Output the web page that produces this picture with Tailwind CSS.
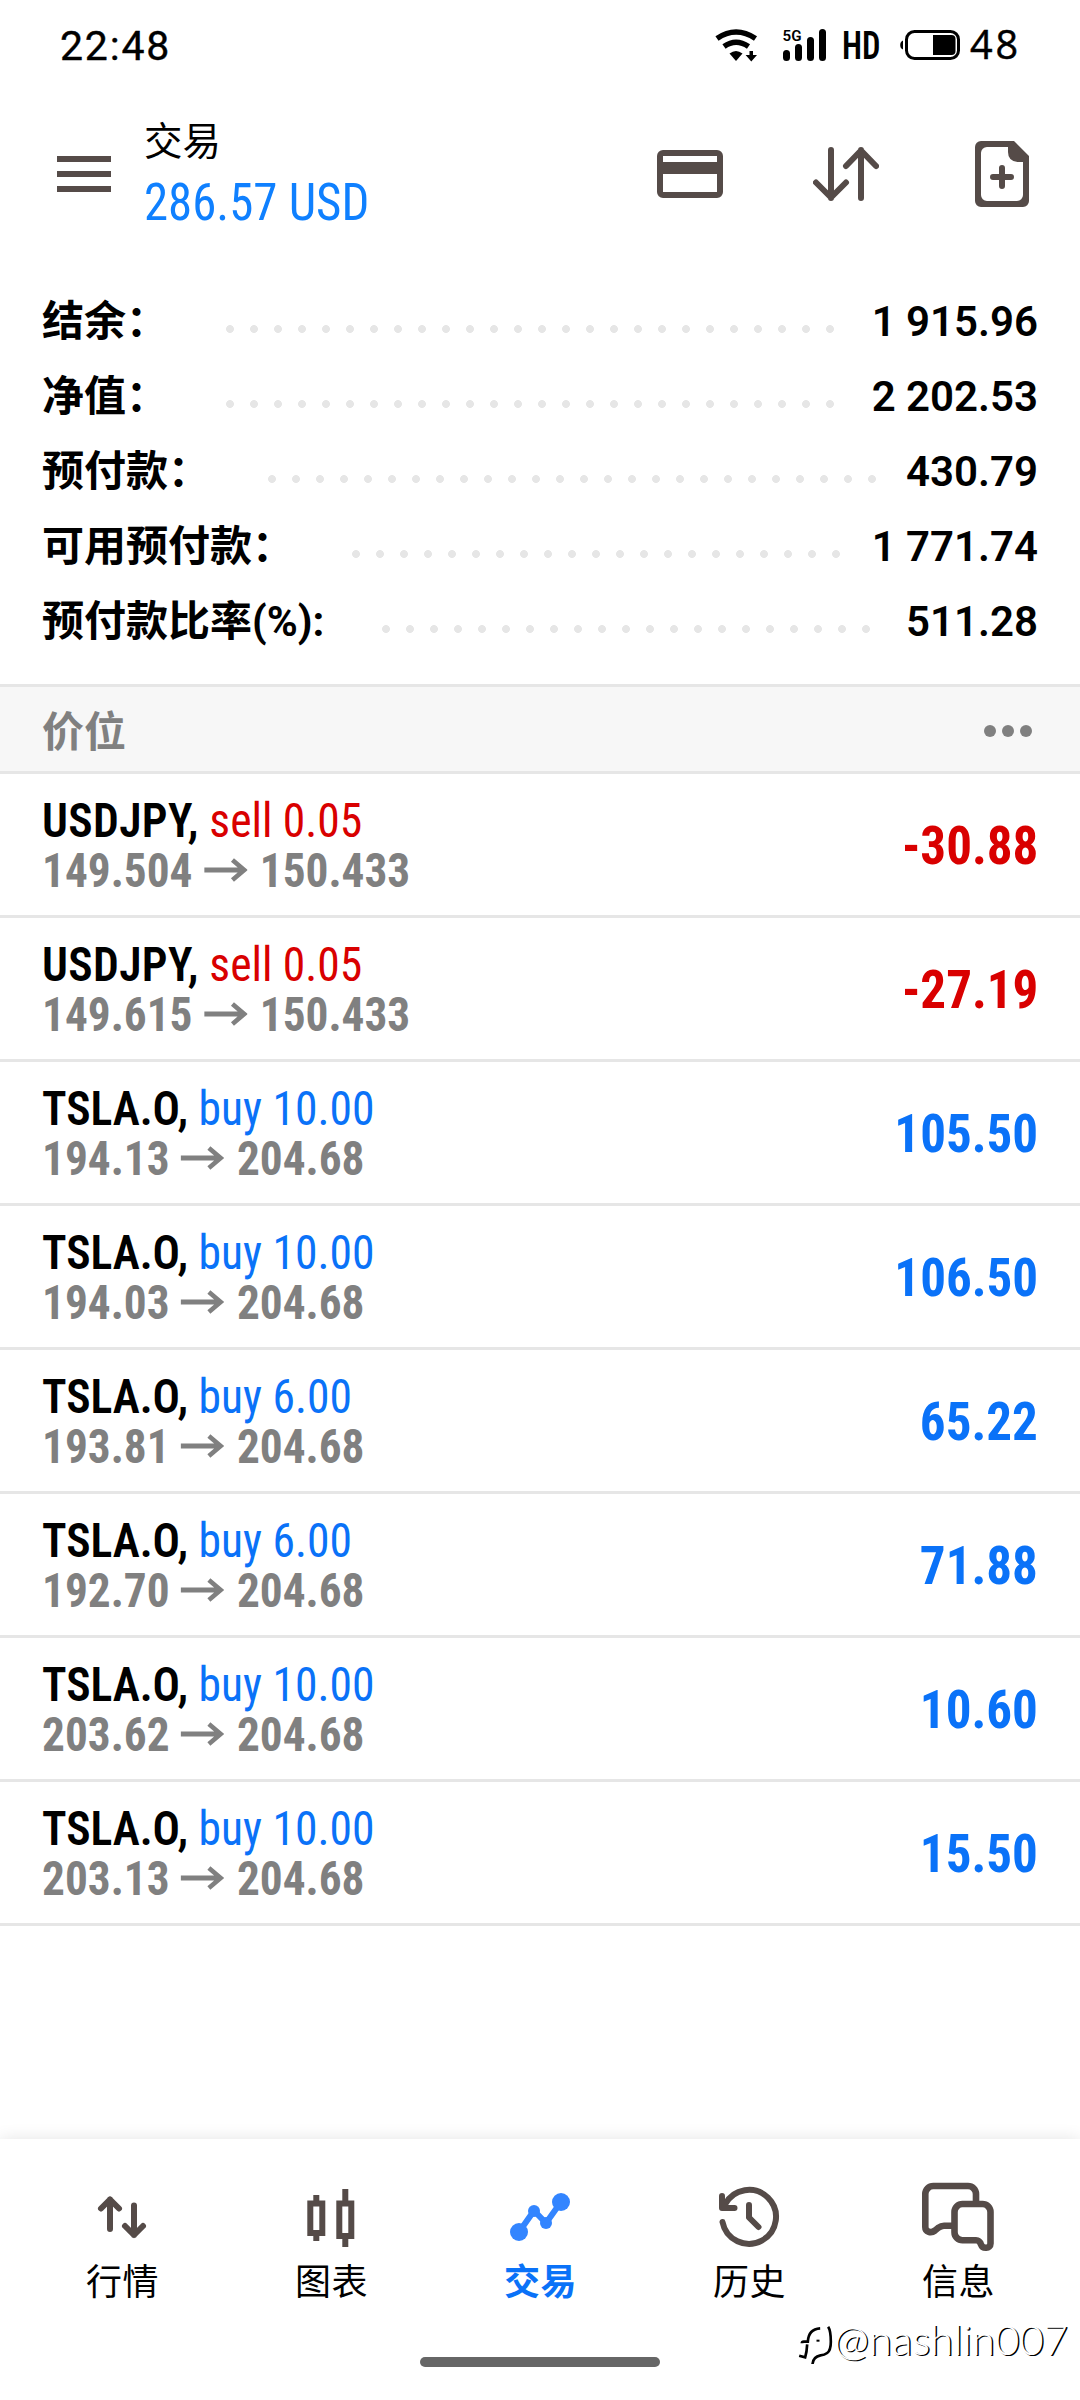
<!DOCTYPE html>
<html lang="zh-CN">
<head>
<meta charset="utf-8">
<title>交易</title>
<script src="https://cdn.jsdelivr.net/npm/@tailwindcss/browser@4"></script>
</head>
<body class="bg-white">
<div class="relative flex h-[2400px] w-[1080px] flex-col overflow-hidden bg-white font-['Roboto','Noto_Sans_CJK_SC',sans-serif] text-black">

  <!-- status bar -->
  <div class="flex h-[90px] shrink-0 items-center pl-[60px]">
    <span class="mt-px text-[41px] leading-[48px] tracking-[1.8px] [-webkit-text-stroke:0.4px_#000]">22:48</span>
    <svg class="ml-auto" width="366" height="90" viewBox="714 0 366 90">
      <g fill="none" stroke="#000" stroke-width="5.5">
        <path d="M717 38.500 Q736 25.500 755.500 38.500"/>
        <path d="M724 46.500 Q736 38 748.500 46.500"/>
      </g>
      <path d="M729.500 53.500Q736 48.500 742.500 53.500L736 61Z"/>
      <path d="M749.500 51h3.500v4h4l-5.700 6.500-5.700-6.500h3.900z"/>
      <g stroke="#000" stroke-width="7" stroke-linecap="round">
        <path d="M786.500 53.500V57.500M798.500 47.500V57.500M810.500 40.500V57.500M822.500 32.500V57.500"/>
      </g>
      <text x="782.500" y="40.700" font-size="15.500" font-weight="600" textLength="19" lengthAdjust="spacingAndGlyphs" class="font-['Roboto']">5G</text>
      <text x="842" y="59" font-size="39.500" font-weight="600" textLength="38.500" lengthAdjust="spacingAndGlyphs" class="font-['Roboto_Condensed']">HD</text>
      <rect x="906.500" y="31.500" width="52" height="27" rx="8" fill="none" stroke="#000" stroke-width="3"/>
      <path d="M933 35h18.500a4 4 0 0 1 4 4v12a4 4 0 0 1-4 4H933z"/>
      <path d="M903 40.500v9q-2.800-1-2.800-4.500t2.800-4.500z"/>
      <text x="970" y="59" font-size="39.500" letter-spacing="3" stroke="#000" stroke-width="0.500" class="font-['Open_Sans']">48</text>
    </svg>
  </div>

  <!-- header -->
  <header class="flex h-[168px] shrink-0 items-center pr-[51px] pl-[57px]">
    <div class="flex w-[54px] flex-col gap-[9px]">
      <i class="h-1.5 bg-[#554b48]"></i><i class="h-1.5 bg-[#554b48]"></i><i class="h-1.5 bg-[#554b48]"></i>
    </div>
    <div class="mt-1 ml-[33px]">
      <h1 class="text-[38.500px] leading-[46px]">交易</h1>
      <p class="mt-2 w-max origin-left scale-x-[0.958] font-['Roboto_Condensed'] text-[51px] leading-[60px] text-[#0f80ff]">286.57 USD</p>
    </div>
    <div class="ml-auto flex items-center">
      <svg width="66" height="48" viewBox="0 0 66 48"><rect x="3" y="3" width="60" height="42" rx="3" fill="none" stroke="#554b48" stroke-width="6"/><path d="M3 12h60v12H3z" fill="#554b48"/></svg>
      <svg class="ml-[90px]" width="66" height="54" viewBox="0 0 66 54" fill="none" stroke="#554b48" stroke-width="6" stroke-linecap="round" stroke-linejoin="round"><path d="M18 3v48M3 35.500l15 15 15-15M48 51V3M33 19l15-15.500L63 19"/></svg>
      <svg class="ml-[96px]" width="54" height="66" viewBox="0 0 54 66"><path fill="#554b48" fill-rule="evenodd" d="M6 0h33l15 15v45a6 6 0 0 1-6 6H6a6 6 0 0 1-6-6V6a6 6 0 0 1 6-6zm6 6a6 6 0 0 0-6 6v42a6 6 0 0 0 6 6h30a6 6 0 0 0 6-6V21h-5.500Q33 20 33 11V6z"/><path d="M27 27v18M18 36h18" stroke="#554b48" stroke-width="6" stroke-linecap="round"/></svg>
    </div>
  </header>

  <!-- account summary -->
  <section id="summary" class="mt-[26px] flex h-[400px] shrink-0 flex-col px-[42px] text-[42px] leading-[75px]"></section>

  <!-- positions -->
  <div class="flex h-[90px] shrink-0 items-center justify-between border-y-[3px] border-[#e6e6e6] bg-[#f7f7f7] pr-12 pl-[42px]">
    <h2 class="pt-[7px] text-[42px] leading-[50px] font-bold text-[#808080]">价位</h2>
    <div class="mt-1 flex gap-1.5"><i class="size-3 rounded-full bg-[#808080]"></i><i class="size-3 rounded-full bg-[#808080]"></i><i class="size-3 rounded-full bg-[#808080]"></i></div>
  </div>
  <ul id="positions" class="font-['Roboto_Condensed']"></ul>

  <!-- tab bar -->
  <nav class="absolute inset-x-0 bottom-0 flex h-[261px] flex-col items-center bg-white shadow-[0_0_16px_rgba(0,0,0,0.11)]">
    <div class="grid w-[1045px] grid-cols-5 pt-[42px] text-center text-[36px] leading-[42px] tracking-[0.500px]">
      <a class="flex flex-col items-center gap-[9px]">
        <svg width="72" height="72" viewBox="0 0 72 72" fill="none" stroke="#554b48" stroke-width="6" stroke-linecap="round" stroke-linejoin="round"><path d="M24 48V18.500M15 27.500l9-9 9 9M48 24.500V54M39 45l9 9 9-9"/></svg><span class="pl-px">行情</span></a>
      <a class="flex flex-col items-center gap-[9px]">
        <svg width="72" height="72" viewBox="0 0 72 72" fill="none" stroke="#554b48" stroke-width="6"><path d="M15.300 22.500h12v29.500h-12zM44.300 22.500h12v32.500h-12zM21.300 14v6M21.300 54v6M50.300 8v12M50.300 57v9"/></svg><span class="pl-px">图表</span></a>
      <a class="flex flex-col items-center gap-[9px] font-bold text-[#0a72f8]">
        <svg width="72" height="72" viewBox="0 0 72 72" fill="#3385ff"><path d="M15 51l15-21.300L42 42l15-21" fill="none" stroke="#3385ff" stroke-width="6"/><circle cx="15" cy="51" r="9"/><circle cx="30" cy="30" r="6"/><circle cx="42" cy="42" r="6"/><circle cx="57" cy="21" r="9"/></svg><span class="pl-px">交易</span></a>
      <a class="flex flex-col items-center gap-[9px]">
        <svg width="72" height="72" viewBox="0 0 72 72" fill="none" stroke="#554b48" stroke-width="6" stroke-linecap="round" stroke-linejoin="round"><path d="M9.500 41A27 27 0 1 0 12 23.500M9 15v12h12.500M36 24v12.500l9.500 9.500"/></svg><span class="pl-px">历史</span></a>
      <a class="flex flex-col items-center gap-[9px]">
        <svg width="72" height="72" viewBox="0 0 72 72" fill="none" stroke="#554b48" stroke-width="6.600"><path d="M54 21V13a8 8 0 0 0-8-8H11.300a8 8 0 0 0-8 8v33c0 5 5.700 6.500 9.700 3.500l3-2.500c2-1.500 3-2.300 6-2.300h9"/><path d="M40.500 23h20a8 8 0 0 1 8 8v31.500c0 5.500-8 5.500-9.500 1-1-3-2-4.300-5-4.300H40.500a8 8 0 0 1-8-8V31a8 8 0 0 1 8-8z"/></svg><span class="pl-px">信息</span></a>
    </div>
    <i class="mt-[53px] h-2.5 w-60 rounded-full bg-[#666]"></i>
  </nav>

  <!-- author tag -->
  <div class="absolute top-[2313px] left-[797px] flex items-center">
    <svg class="mt-3" width="37" height="40" viewBox="50 45 110 120" fill="none" stroke="#000" stroke-width="8"><path d="M64 100q0-5 6-5h12q2-38 37-40M80 103q-1 22-6 39l-18-5M143 50q8 12 8 45 0 26-11 34-8 6-20 7-22 4-24 26"/><path d="M108 92h9" stroke-width="6"/></svg>
    <span class="font-['Lato'] text-[42px] leading-[48px] font-light text-white [text-shadow:1.5px_1px_0_#000]">@nashlin007</span>
  </div>
</div>

<script>
  const summary = [
    ['结余：', '1 915.96', 624], ['净值：', '2 202.53', 624], ['预付款：', '430.79', 624],
    ['可用预付款：', '1 771.74', 504], ['预付款比率(%):', '511.28', 504],
  ];
  document.getElementById('summary').innerHTML = summary.map(([label, value, dots]) => `
    <div class="flex h-[75px] items-center">
      <span class="font-bold">${label}</span>
      <i class="mt-[15px] ml-[50px] h-2 shrink-0 bg-[radial-gradient(circle,#e6e6e6_3.6px,transparent_4.2px)] bg-[length:24px_8px]" style="width:${dots}px"></i>
      <span class="ml-auto font-semibold">${value}</span>
    </div>`).join('');

  const positions = [
    ['USDJPY', 'sell 0.05', '149.504', '150.433', '-30.88'],
    ['USDJPY', 'sell 0.05', '149.615', '150.433', '-27.19'],
    ['TSLA.O', 'buy 10.00', '194.13', '204.68', '105.50'],
    ['TSLA.O', 'buy 10.00', '194.03', '204.68', '106.50'],
    ['TSLA.O', 'buy 6.00', '193.81', '204.68', '65.22'],
    ['TSLA.O', 'buy 6.00', '192.70', '204.68', '71.88'],
    ['TSLA.O', 'buy 10.00', '203.62', '204.68', '10.60'],
    ['TSLA.O', 'buy 10.00', '203.13', '204.68', '15.50'],
  ];
  document.getElementById('positions').innerHTML = positions.map(([sym, side, open, now, profit]) => `
    <li class="flex h-36 items-center justify-between border-b-[3px] border-[#e6e6e6] px-[42px] pt-0.5">
      <div class="text-[48px] leading-[51px]">
        <p class="w-max origin-left scale-x-[0.949]"><b class="font-semibold ${sym[0] === 'U' ? 'tracking-[0.4px]' : ''}">${sym},</b> <span class="${side[0] === 's' ? 'text-[#d90000]' : 'text-[#0a72f8]'}">${side}</span></p>
        <p class="-mt-px mb-px flex w-max origin-left scale-x-[0.943] items-center font-bold text-[#808080]"><span>${open}</span><svg class="mr-[13px] mb-px ml-3" width="46.500" height="24" viewBox="0 0 45 24" preserveAspectRatio="none" fill="none" stroke="#808080" stroke-width="4.800"><path d="M0 12h41M29 2l12 10-12 10"/></svg><span>${now}</span></p>
      </div>
      <span class="origin-right scale-x-[0.945] text-[54px] font-bold ${profit[0] === '-' ? 'text-[#d90000]' : 'text-[#0a72f8]'}">${profit}</span>
    </li>`).join('');
</script>
</body>
</html>
